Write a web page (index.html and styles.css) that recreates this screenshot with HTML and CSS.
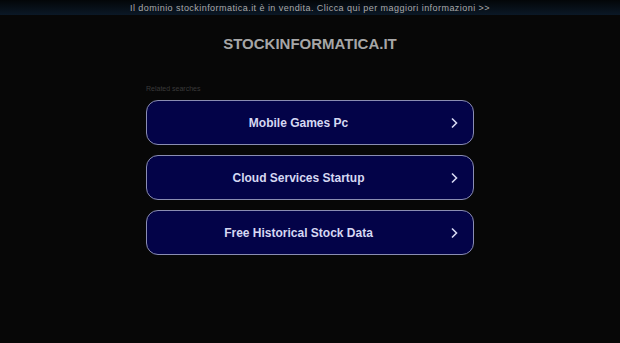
FILE: index.html
```html
<!DOCTYPE html>
<html lang="it">
<head>
    <meta charset="UTF-8">
    <meta name="viewport" content="width=device-width, initial-scale=1.0">
    <title>stockinformatica.it</title>
    <link rel="stylesheet" href="styles.css">
</head>
<body>

    <div class="sale-bar">
        <a href="#">Il dominio stockinformatica.it è in vendita. Clicca qui per maggiori informazioni &gt;&gt;</a>
    </div>

    <h1 class="domain">STOCKINFORMATICA.IT</h1>

    <div class="searches">
        <p class="searches-title">Related searches</p>
        <a class="search-btn" href="#">
            <span>Mobile Games Pc</span>
            <svg class="chevron" width="8" height="12" viewBox="0 0 8 12"><path d="M2 1.5 L6.5 6 L2 10.5" fill="none" stroke="currentColor" stroke-width="1.6"/></svg>
        </a>
        <a class="search-btn" href="#">
            <span>Cloud Services Startup</span>
            <svg class="chevron" width="8" height="12" viewBox="0 0 8 12"><path d="M2 1.5 L6.5 6 L2 10.5" fill="none" stroke="currentColor" stroke-width="1.6"/></svg>
        </a>
        <a class="search-btn" href="#">
            <span>Free Historical Stock Data</span>
            <svg class="chevron" width="8" height="12" viewBox="0 0 8 12"><path d="M2 1.5 L6.5 6 L2 10.5" fill="none" stroke="currentColor" stroke-width="1.6"/></svg>
        </a>
    </div>

</body>
</html>
```

FILE: styles.css
```css
body {
    font-family: Arial, "Liberation Sans", sans-serif;
    margin: 0;
    padding: 0;
    background-color: #070707;
    text-align: center;
}

.sale-bar {
    height: 15px;
    line-height: 12px;
    background: linear-gradient(#030608, #0b1826);
}

.sale-bar a {
    font-size: 9px;
    letter-spacing: 0.45px;
    color: #a9a9a9;
    text-decoration: none;
}

.domain {
    margin: 20px 0 0;
    font-size: 15px;
    line-height: 18px;
    font-weight: bold;
    color: #a6a6a6;
}

.searches {
    width: 328px;
    margin: 32px auto 0;
    text-align: left;
}

.searches-title {
    margin: 0 0 7px;
    font-size: 7px;
    line-height: 8px;
    color: #3a3a3a;
}

.search-btn {
    position: relative;
    display: flex;
    align-items: center;
    justify-content: center;
    box-sizing: border-box;
    height: 45px;
    margin-bottom: 10px;
    padding-right: 23px;
    background: #030348;
    border: 1px solid #8a8db2;
    border-radius: 12px;
    color: #d6d8f2;
    font-size: 12px;
    font-weight: bold;
    letter-spacing: 0;
    text-decoration: none;
}

.chevron {
    position: absolute;
    right: 15px;
    top: 16px;
}
```
